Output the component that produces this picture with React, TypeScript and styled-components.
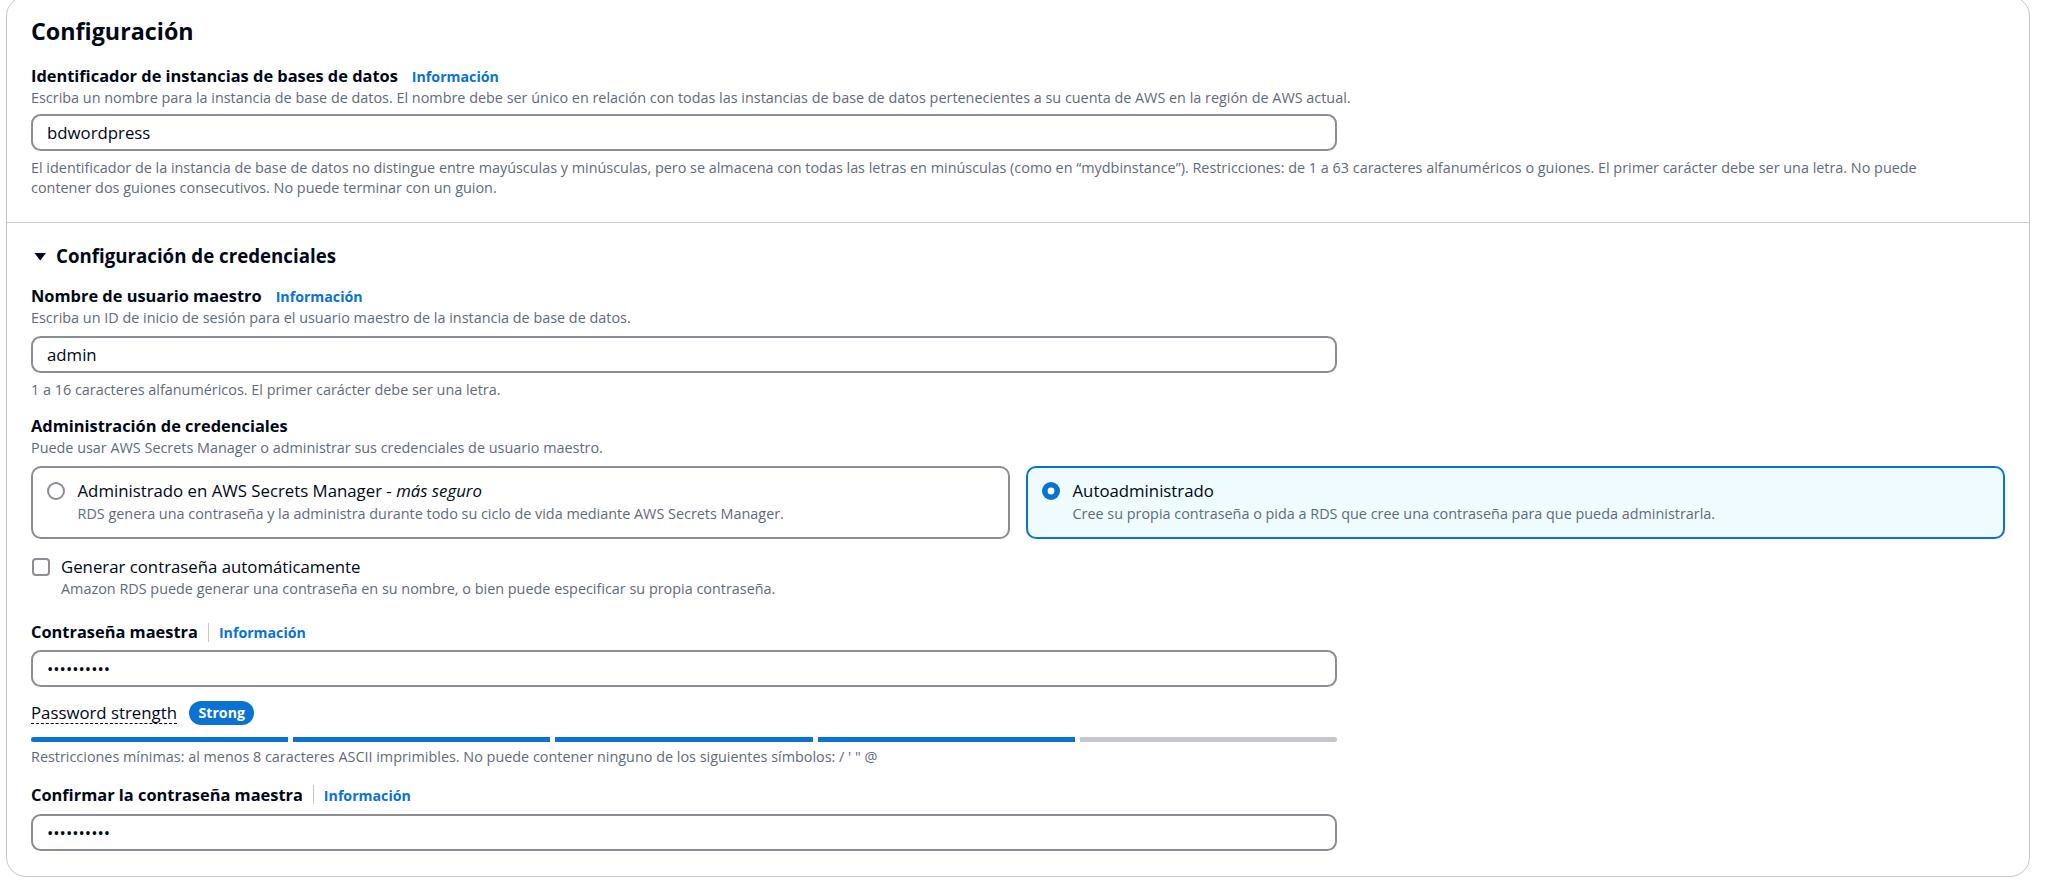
import React from "react";
import styled, { createGlobalStyle } from "styled-components";

const GlobalStyle = createGlobalStyle`
  * { box-sizing: border-box; }
  body {
    margin: 0;
    background: #ffffff;
    color: #000716;
    font-family: "Open Sans", "Noto Sans", sans-serif;
  }
`;

const Page = styled.div`
  margin-top: -4px;
  padding: 0 15px 0 6px;
`;

const Card = styled.div`
  border: 1px solid #c6c6cd;
  border-radius: 20px;
  background: #ffffff;
`;

const Section = styled.section<{ $top: number }>`
  display: flex;
  flex-direction: column;
  padding: ${(p) => p.$top}px 24px 25px;

  & + & {
    border-top: 1px solid #c6c6cd;
  }
`;

const Heading = styled.h2`
  margin: 0;
  font-size: 23.3px;
  line-height: 30px;
  font-weight: 700;
`;

const ExpandTitle = styled.h3`
  display: flex;
  align-items: center;
  gap: 6px;
  margin: 0;
  font-size: 18.7px;
  line-height: 26px;
  font-weight: 700;
`;

const Field = styled.div<{ $mt: number }>`
  display: flex;
  flex-direction: column;
  margin-top: ${(p) => p.$mt}px;
`;

const LabelRow = styled.div<{ $divided?: boolean }>`
  display: flex;
  align-items: baseline;
  gap: ${(p) => (p.$divided ? 0 : 14)}px;
`;

const Label = styled.span`
  font-size: 16.4px;
  line-height: 24px;
  font-weight: 700;
`;

const Divider = styled.span`
  align-self: center;
  width: 1px;
  height: 19px;
  margin: 0 10px;
  background: #c6c6cd;
`;

const InfoLink = styled.a`
  color: #0972d3;
  font-size: 14.2px;
  font-weight: 700;
  text-decoration: none;
`;

const Description = styled.div<{ $mt?: number }>`
  margin-top: ${(p) => p.$mt ?? 0}px;
  color: #5f6b7a;
  font-size: 14.4px;
  line-height: 19.5px;
`;

const TextInput = styled.input<{ $mt: number }>`
  display: block;
  width: 1306px;
  max-width: 100%;
  height: 37px;
  margin-top: ${(p) => p.$mt}px;
  padding: 0 14px;
  border: 2px solid #8c8c94;
  border-radius: 9.6px;
  background: #ffffff;
  color: #000716;
  font-family: inherit;
  font-size: 16.8px;
  outline: none;
`;

const Tiles = styled.div`
  display: grid;
  grid-template-columns: 1fr 1fr;
  gap: 16px;
  margin-top: 9px;
`;

const Tile = styled.div<{ $selected?: boolean }>`
  display: flex;
  gap: 12.5px;
  padding: 10.2px 14px 13px;
  border: 2px solid ${(p) => (p.$selected ? "#0972d3" : "#8c8c94")};
  border-radius: 10px;
  background: ${(p) => (p.$selected ? "#f0fbff" : "#ffffff")};
`;

const RadioMark = styled.svg`
  flex: none;
  margin-top: 4px;
`;

const TileBody = styled.div`
  display: flex;
  flex-direction: column;
`;

const TileTitle = styled.span`
  font-size: 16.8px;
  line-height: 26px;

  & > em {
    font-style: italic;
  }
`;

const CheckRow = styled.label`
  display: flex;
  align-items: flex-start;
  gap: 11px;
  margin-top: 16px;
  padding-left: 1px;
`;

const CheckBox = styled.span`
  flex: none;
  width: 18px;
  height: 18px;
  margin-top: 3px;
  border: 2px solid #8c8c94;
  border-radius: 4px;
  background: #ffffff;
`;

const CheckText = styled.span`
  font-size: 16.8px;
  line-height: 24px;
`;

const CheckDescription = styled(Description)`
  padding-left: 30px;
`;

const StrengthRow = styled.div`
  display: flex;
  align-items: center;
  gap: 12px;
  height: 24px;
  margin-top: 14px;
`;

const StrengthLabel = styled.span`
  font-size: 16.8px;
  line-height: 20px;
  border-bottom: 1px dashed #000716;
`;

const Badge = styled.span`
  height: 24px;
  padding: 0 9.5px;
  border-radius: 12px;
  background: #0972d3;
  color: #ffffff;
  font-size: 14.2px;
  line-height: 24px;
  font-weight: 700;
`;

const Bars = styled.div`
  display: flex;
  gap: 5px;
  width: 1306px;
  max-width: 100%;
  height: 5px;
  margin-top: 12px;
  border-radius: 3px;
  overflow: hidden;
`;

const Bar = styled.span<{ $on: boolean }>`
  flex: 1;
  background: ${(p) => (p.$on ? "#0972d3" : "#c6c6cd")};
`;

const Caret = () => (
  <svg width="19" height="19" viewBox="0 0 19 19" aria-hidden="true">
    <path d="M3.5 6 L15 6 L9.25 13.5 Z" fill="#000716" />
  </svg>
);

const Radio = ({ checked }: { checked?: boolean }) => (
  <RadioMark width="18" height="18" viewBox="0 0 18 18" aria-hidden="true">
    {checked ? (
      <>
        <circle cx="9" cy="9" r="9" fill="#0972d3" />
        <circle cx="9" cy="9" r="3.4" fill="#ffffff" />
      </>
    ) : (
      <circle cx="9" cy="9" r="8" fill="#ffffff" stroke="#8c8c94" strokeWidth="2" />
    )}
  </RadioMark>
);

const FieldLabel = ({ text, divided }: { text: string; divided?: boolean }) => (
  <LabelRow $divided={divided}>
    <Label>{text}</Label>
    {divided && <Divider />}
    <InfoLink href="#">Información</InfoLink>
  </LabelRow>
);

const strength = [true, true, true, true, false];

export default function App() {
  return (
    <Page>
      <GlobalStyle />
      <Card>
        <Section $top={19}>
          <Heading>Configuración</Heading>
          <Field $mt={17.5}>
            <FieldLabel text="Identificador de instancias de bases de datos" />
            <Description>
              Escriba un nombre para la instancia de base de datos. El nombre debe ser único en relación con todas las
              instancias de base de datos pertenecientes a su cuenta de AWS en la región de AWS actual.
            </Description>
            <TextInput $mt={6.5} readOnly value="bdwordpress" />
            <Description $mt={7.75}>
              El identificador de la instancia de base de datos no distingue entre mayúsculas y minúsculas, pero se
              almacena con todas las letras en minúsculas (como en “mydbinstance”). Restricciones: de 1 a 63 caracteres
              alfanuméricos o guiones. El primer carácter debe ser una letra. No puede
              <br />
              contener dos guiones consecutivos. No puede terminar con un guion.
            </Description>
          </Field>
        </Section>

        <Section $top={20}>
          <ExpandTitle>
            <Caret />
            Configuración de credenciales
          </ExpandTitle>

          <Field $mt={15}>
            <FieldLabel text="Nombre de usuario maestro" />
            <Description>
              Escriba un ID de inicio de sesión para el usuario maestro de la instancia de base de datos.
            </Description>
            <TextInput $mt={8} readOnly value="admin" />
            <Description $mt={7}>1 a 16 caracteres alfanuméricos. El primer carácter debe ser una letra.</Description>
          </Field>

          <Field $mt={14.5}>
            <Label>Administración de credenciales</Label>
            <Description>
              Puede usar AWS Secrets Manager o administrar sus credenciales de usuario maestro.
            </Description>
            <Tiles>
              <Tile>
                <Radio />
                <TileBody>
                  <TileTitle>
                    Administrado en AWS Secrets Manager - <em>más seguro</em>
                  </TileTitle>
                  <Description>
                    RDS genera una contraseña y la administra durante todo su ciclo de vida mediante AWS Secrets
                    Manager.
                  </Description>
                </TileBody>
              </Tile>
              <Tile $selected>
                <Radio checked />
                <TileBody>
                  <TileTitle>Autoadministrado</TileTitle>
                  <Description>
                    Cree su propia contraseña o pida a RDS que cree una contraseña para que pueda administrarla.
                  </Description>
                </TileBody>
              </Tile>
            </Tiles>
          </Field>

          <CheckRow>
            <CheckBox />
            <CheckText>Generar contraseña automáticamente</CheckText>
          </CheckRow>
          <CheckDescription>
            Amazon RDS puede generar una contraseña en su nombre, o bien puede especificar su propia contraseña.
          </CheckDescription>

          <Field $mt={22}>
            <FieldLabel text="Contraseña maestra" divided />
            <TextInput $mt={6} readOnly value="••••••••••" />
            <StrengthRow>
              <StrengthLabel>Password strength</StrengthLabel>
              <Badge>Strong</Badge>
            </StrengthRow>
            <Bars>
              {strength.map((on, i) => (
                <Bar key={i} $on={on} />
              ))}
            </Bars>
            <Description $mt={5}>
              Restricciones mínimas: al menos 8 caracteres ASCII imprimibles. No puede contener ninguno de los siguientes
              símbolos: / ' " @
            </Description>
          </Field>

          <Field $mt={16}>
            <FieldLabel text="Confirmar la contraseña maestra" divided />
            <TextInput $mt={7} readOnly value="••••••••••" />
          </Field>
        </Section>
      </Card>
    </Page>
  );
}
